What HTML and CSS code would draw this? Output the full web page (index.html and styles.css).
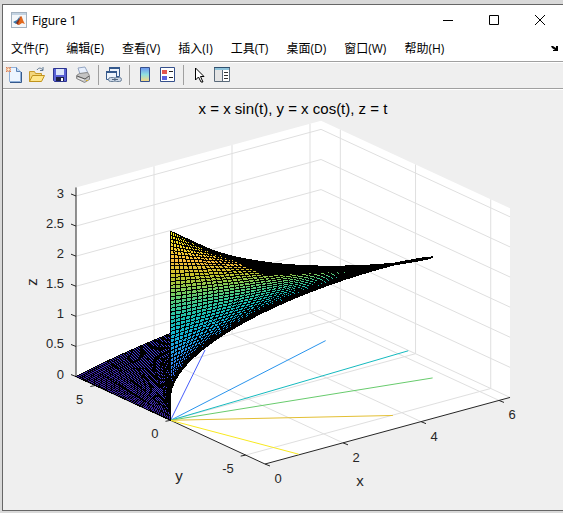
FILE: index.html
```html
<!DOCTYPE html>
<html lang="zh-CN">
<head>
<meta charset="utf-8">
<title>Figure 1</title>
<link rel="stylesheet" href="styles.css">
</head>
<body>
<main class="window">
  <header class="titlebar">
    <svg class="app-icon" viewBox="0 0 16 16" aria-hidden="true">
      <rect x=".5" y=".5" width="15" height="15" fill="#f4f7fa" stroke="#a3b1bf"/>
      <path d="M1 1h14v2H1z" fill="#c3d3e2"/>
      <path d="M2 10l4-2 3-4-2 7-2 1z" fill="#3b78a8"/>
      <path d="M5 11l3-4 2-3v7l-3 2z" fill="#8c2f1b"/>
      <path d="M10 4c1 0 2 5 4 8l-3-1-3 2-1-1z" fill="#e2691e"/>
    </svg>
    <h1 class="title">Figure 1</h1>
    <div class="controls">
      <button class="control" type="button" aria-label="最小化"><svg viewBox="0 0 10 10"><path d="M0 5.500h10"/></svg></button>
      <button class="control" type="button" aria-label="最大化"><svg viewBox="0 0 10 10"><path d="M.5.5h9v9h-9z"/></svg></button>
      <button class="control" type="button" aria-label="关闭"><svg viewBox="0 0 10 10"><path d="M0 0l10 10M10 0L0 10"/></svg></button>
    </div>
  </header>
  <nav class="menubar">
    <button type="button">文件(F)</button>
    <button type="button">编辑(E)</button>
    <button type="button">查看(V)</button>
    <button type="button">插入(I)</button>
    <button type="button">工具(T)</button>
    <button type="button">桌面(D)</button>
    <button type="button">窗口(W)</button>
    <button type="button">帮助(H)</button>
    <button class="dock" type="button" aria-label="停靠"><svg viewBox="0 0 7 5"><path d="M0 0h2l3 2V0h2v5H2V4h2L1 2z"/></svg></button>
  </nav>
  <div class="toolbar">
    <button type="button" aria-label="新建"><svg viewBox="0 0 18 18">
      <path d="M4.500 1.500h7l4 4v10h-11z" fill="#eef6ff" stroke="#8fb0da"/>
      <path d="M11.500 1.500v4h4" fill="#c3daf3" stroke="#5c82b4"/>
      <path d="M16.500 6v10.500H5" fill="none" stroke="#35598c"/>
      <path d="M1 1l1.500 1.500M6 1L4.500 2.500M1 6l1.500-1.500M6 6L4.500 4.500" stroke="#e08050"/>
      <circle cx="3.500" cy="3.500" r="1.800" fill="#fff0d0" stroke="#e07848"/>
    </svg></button>
    <button type="button" aria-label="打开"><svg viewBox="0 0 18 18">
      <path d="M1.500 15.500v-10h5l1 2h6v3" fill="#f4d67b" stroke="#c79a2c"/>
      <path d="M1.500 15.500l3-6h12l-3 6z" fill="#ffe68a" stroke="#c0931c"/>
      <path d="M9 4c2-3 4-2 6 0m0-3v3.500h-3" fill="none" stroke="#5d7691"/>
    </svg></button>
    <button type="button" aria-label="保存"><svg viewBox="0 0 18 18">
      <path d="M2.500 2.500h13v13h-12l-1-1z" fill="#5a62d4" stroke="#2c3490"/>
      <path d="M5 3h8v6H5z" fill="#dce6fa"/><path d="M5 11h8v4H5z" fill="#1d2142"/><path d="M10 12h2v3h-2z" fill="#fff"/>
    </svg></button>
    <button type="button" aria-label="打印"><svg viewBox="0 0 18 18">
      <path d="M6 8L4 2l7-1 3 6z" fill="#e7effc" stroke="#93a5c2"/>
      <path d="M2.500 9.500l3-2 8-1 2 3v4l-5 3-8-4z" fill="#c4c4c4" stroke="#8a8a8a"/>
      <path d="M3 10l8 3 4-3" fill="none" stroke="#555"/><path d="M4 12l6 2" stroke="#eee"/>
      <path d="M12 14.500h2" stroke="#d3ad30"/>
    </svg></button>
    <span class="divider"></span>
    <button type="button" aria-label="链接绘图"><svg viewBox="0 0 18 18">
      <path d="M4.500 1.500h10v9h-10z" fill="#eef4fc" stroke="#35598c"/><path d="M4 1h11v2H4z" fill="#35598c"/>
      <path d="M1.500 5.500h10v8h-10z" fill="#eef4fc" stroke="#35598c"/><path d="M1 5h11v2H1z" fill="#35598c"/>
      <rect x="3.500" y="11.500" width="7" height="4" rx="2" fill="#cbd7e6" stroke="#6b8099"/>
      <rect x="9.500" y="11.500" width="7" height="4" rx="2" fill="#cbd7e6" stroke="#6b8099"/>
      <path d="M7 13.500h6" stroke="#53677e"/>
    </svg></button>
    <span class="divider"></span>
    <button type="button" aria-label="颜色栏"><svg viewBox="0 0 18 18">
      <defs><linearGradient id="bar" x2="0" y2="1"><stop stop-color="#6b93f0"/><stop offset=".5" stop-color="#8fe0e0"/><stop offset="1" stop-color="#ffd880"/></linearGradient></defs>
      <path d="M4.500 1.500h9v14h-9z" fill="url(#bar)" stroke="#35508c"/>
    </svg></button>
    <button type="button" aria-label="图例"><svg viewBox="0 0 18 18">
      <path d="M1.500 1.500h14v14h-14z" fill="#fff" stroke="#35508c"/>
      <path d="M3 4h5v4H3z" fill="#e4564e"/><path d="M3 10h5v4H3z" fill="#5b62e0"/>
      <path d="M10 5.500h4M10 11.500h4" stroke="#222"/>
    </svg></button>
    <span class="divider"></span>
    <button type="button" aria-label="编辑绘图"><svg viewBox="0 0 18 18">
      <path d="M5.500 2v12l3-3 2.500 5h2l-2.500-5.500h3.500z" fill="#fff" stroke="#000"/>
    </svg></button>
    <button type="button" aria-label="属性"><svg viewBox="0 0 18 18">
      <path d="M1.500 1.500h15v14h-15z" fill="#e4e4e4" stroke="#5a6a7a"/><path d="M1 1h16v1H1z" fill="#2f5070"/><path d="M2 2h14v2H2z" fill="#8fc4dc"/>
      <path d="M10 4h6v11h-6z" fill="#fff"/><path d="M9.500 4v11" stroke="#5a6a7a"/><path d="M11 6.500h4M11 9.500h4M11 12.500h4" stroke="#333"/>
    </svg></button>
  </div>
  <svg class="figure" id="figure" viewBox="3 90 560 420" role="img" aria-label="x = x sin(t), y = x cos(t), z = t"></svg>
</main>
<script src="plot.js"></script>
</body>
</html>
```
FILE: styles.css
```css
* { box-sizing: border-box; }
body {
  margin: 0;
  padding: 4px 0 2px 2px;
  background: #d9d9d9;
  font-family: "Open Sans", "Noto Sans CJK SC", sans-serif;
  font-size: 12px;
  color: #000;
}
.window {
  border: 1px solid #666;
  border-right: 0;
  background: #efefef;
}
button {
  margin: 0;
  padding: 0;
  border: 0;
  background: none;
  color: inherit;
  font: inherit;
}
button svg { display: block; }
.titlebar {
  display: flex;
  align-items: center;
  height: 30px;
  padding-left: 8px;
  gap: 5px;
  background: #fff;
}
.app-icon { width: 16px; height: 16px; }
.title { margin: 0; font-size: 12px; font-weight: 400; }
.controls { display: flex; margin-left: auto; }
.control { display: grid; place-items: center; width: 46px; height: 28px; }
.control svg { width: 10px; height: 10px; fill: none; stroke: #000; }
.menubar {
  display: flex;
  align-items: center;
  height: 26px;
  padding: 0 5px 0 8px;
  gap: 18px;
  background: #fff;
  white-space: nowrap;
}
.dock { margin-left: auto; }
.dock svg { width: 7px; height: 5px; }
.toolbar {
  display: flex;
  align-items: center;
  height: 28px;
  margin-bottom: 1px;
  padding: 0 2px;
  gap: 5px;
  border-top: 1px solid #a0a0a0;
  border-bottom: 1px solid #a0a0a0;
  box-shadow: 0 1px #fff, inset 0 1px #fff;
}
.toolbar svg { width: 18px; height: 18px; }
.divider { width: 1px; height: 20px; margin: 0 1px; background: #a0a0a0; }
.figure { display: block; width: 100%; height: auto; }
.pane { fill: #fff; }
.grid { fill: none; stroke: #dfdfdf; }
.axis { fill: none; stroke: #262626; }
.cell { stroke: #000; stroke-width: 1; shape-rendering: crispEdges; }
.contour { fill: none; }
.figure text {
  font-family: "Liberation Sans", sans-serif;
  font-size: 13px;
  fill: #262626;
  text-anchor: middle;
}
.figure .before { text-anchor: end; }
.figure .heading { font-size: 15px; fill: #000; }
.figure .name { font-size: 15px; }
```
FILE: plot.js
```js
const figure = document.getElementById("figure");
const TAU = 2 * Math.PI;

// Projection of data coordinates onto the drawing.
const project = (x, y, z) => [
  170.5 + 39 * x - 15.04 * y,
  420.3 - 10.6 * x - 6.96 * y - 60.2 * z
];
const depth = (x, y, z) => -0.527 * x / TAU - 0.687 * y / (2 * TAU) + 0.5 * z / Math.PI;

function add(tag, attributes, text) {
  const node = document.createElementNS("http://www.w3.org/2000/svg", tag);
  for (const key in attributes) node.setAttribute(key, attributes[key]);
  if (text) node.textContent = text;
  figure.appendChild(node);
}
const points = list => list.map(p => project(...p).map(v => v.toFixed(2)).join(",")).join(" ");
const line = (name, ...list) => add("polyline", { class: name, points: points(list) });

const stops = [
  [62, 38, 168], [71, 65, 226], [71, 96, 253], [52, 127, 252], [38, 153, 234],
  [18, 177, 214], [22, 190, 183], [61, 202, 145], [128, 204, 89], [197, 194, 42],
  [252, 188, 61], [247, 217, 43], [249, 251, 21]
];
function colour(t) {
  const at = Math.min(Math.max(t, 0), 1) * (stops.length - 1);
  const i = Math.min(Math.floor(at), stops.length - 2);
  return `rgb(${stops[i].map((v, k) => Math.round(v + (stops[i + 1][k] - v) * (at - i))).join(",")})`;
}

// Panes
add("polygon", { class: "pane", points: points([
  [0, TAU, 0], [0, -TAU, 0], [TAU, -TAU, 0], [TAU, -TAU, Math.PI], [TAU, TAU, Math.PI], [0, TAU, Math.PI]
]) });

// Grid
for (const x of [2, 4, 6]) line("grid", [x, -TAU, 0], [x, TAU, 0], [x, TAU, Math.PI]);
for (const y of [-5, 0, 5]) line("grid", [0, y, 0], [TAU, y, 0], [TAU, y, Math.PI]);
for (let z = 0; z <= 3; z += 0.5) line("grid", [0, TAU, z], [TAU, TAU, z], [TAU, -TAU, z]);

// Axes with ticks and numbers
line("axis", [0, TAU, Math.PI], [0, TAU, 0], [0, -TAU, 0], [TAU, -TAU, 0]);
for (let z = 0; z <= 3; z += 0.5) {
  const [px, py] = project(0, TAU, z);
  add("path", { class: "axis", d: `M${px} ${py}l-5-2` });
  add("text", { class: "before", x: 64, y: py + 2 }, String(z));
}
for (const y of [5, 0, -5]) {
  const [px, py] = project(0, y, 0);
  add("path", { class: "axis", d: `M${px} ${py}l-5 1` });
  add("text", { class: "before", x: px - 12, y: py + 18 }, String(y));
}
for (const x of [0, 2, 4, 6]) {
  const [px, py] = project(x, -TAU, 0);
  add("path", { class: "axis", d: `M${px} ${py}l5 2` });
  add("text", { x: px + 13, y: py + 19 }, String(x));
}

// Contours on the floor
for (let t = 0.5; t <= 3; t += 0.5) {
  add("polyline", {
    class: "contour", stroke: colour(t / Math.PI),
    points: points([[0, 0, 0], [TAU * Math.sin(t), TAU * Math.cos(t), 0]])
  });
}

// Surface cells, far to near
const STEPS = 49;
const at = (i, j) => {
  const s = TAU * i / STEPS;
  const t = Math.PI * j / STEPS;
  return [s * Math.sin(t), s * Math.cos(t), t];
};
const cells = [];
for (let i = 0; i < STEPS; i++) {
  for (let j = 0; j < STEPS; j++) {
    const corners = [at(i, j), at(i + 1, j), at(i + 1, j + 1), at(i, j + 1)];
    cells.push({ corners, j, d: corners.reduce((sum, p) => sum + depth(...p), 0) });
  }
}
cells.sort((a, b) => a.d - b.d);
for (const cell of cells) {
  add("polygon", { class: "cell", fill: colour(cell.j / STEPS), points: points(cell.corners) });
}

add("text", { class: "heading", x: 293, y: 114 }, "x = x sin(t), y = x cos(t), z = t");
add("text", { class: "name", x: 360, y: 486 }, "x");
add("text", { class: "name", x: 179, y: 481 }, "y");
add("text", { class: "name", transform: "translate(37 282) rotate(-90)" }, "z");
```
